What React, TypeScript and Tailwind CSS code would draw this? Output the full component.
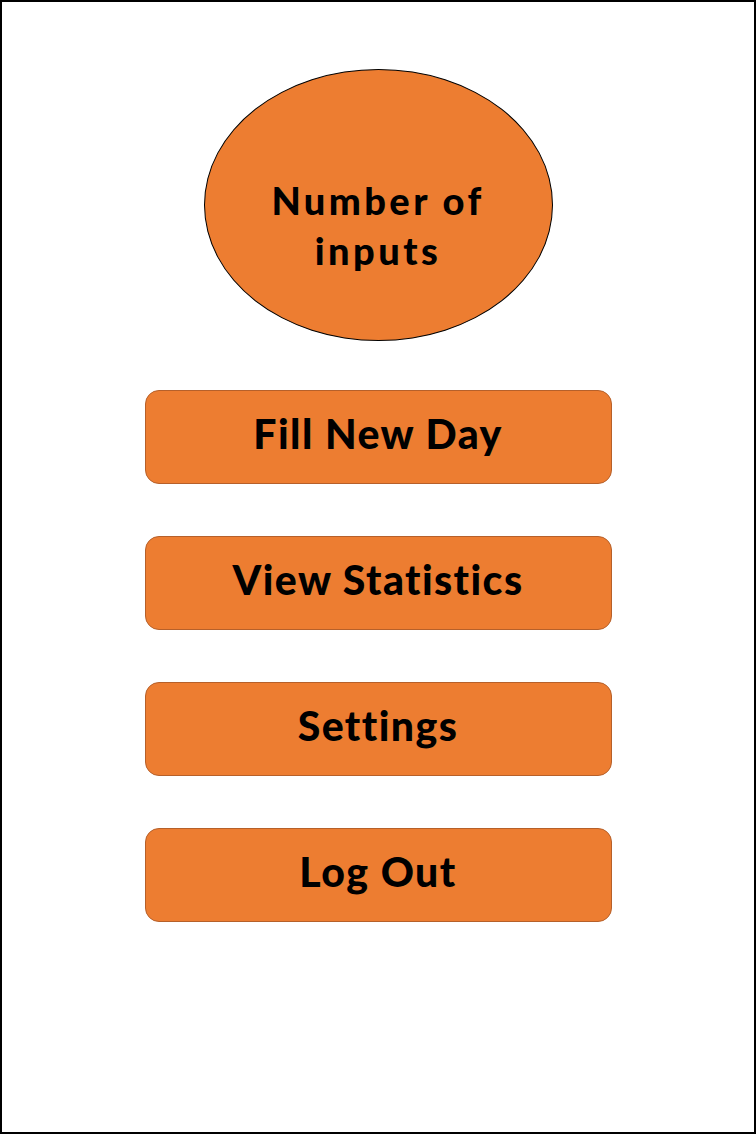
const BUTTONS = ["Fill New Day", "View Statistics", "Settings", "Log Out"];

export default function App() {
  return (
    <div
      className="w-[756px] h-[1134px] bg-white border-2 border-black flex flex-col items-center"
      style={{ fontFamily: "Lato, 'Noto Sans', sans-serif" }}
    >
      {/* Counter bubble */}
      <div className="mt-[67px] w-[349px] h-[272px] rounded-[50%] bg-[#ED7D31] border border-black flex items-center justify-center">
        <p className="text-center text-[38px] leading-[50px] font-black tracking-[0.09em] text-black pt-[40px]">
          Number of
          <br />
          inputs
        </p>
      </div>

      {/* Menu */}
      <div className="mt-[49px] flex flex-col gap-[52px]">
        {BUTTONS.map(label => (
          <button
            key={label}
            className="w-[467px] h-[94px] rounded-[14px] bg-[#ED7D31] border border-[#B6602A] flex items-center justify-center text-[41px] font-black tracking-[0.035em] text-black pb-[6px]"
          >
            {label}
          </button>
        ))}
      </div>
    </div>
  );
}
